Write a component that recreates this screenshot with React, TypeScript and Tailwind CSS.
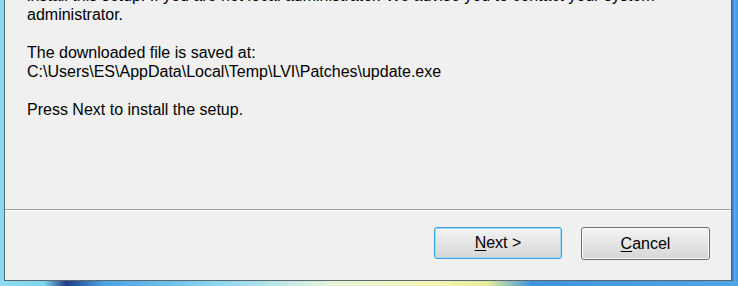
/**
 * Installer wizard page — "update downloaded" step, Windows 7 Aero frame.
 */

const FONT = { fontFamily: '"Liberation Sans", Arial, sans-serif' }

function WizardButton({
  accel,
  rest,
  focused,
}: {
  accel: string
  rest: string
  focused?: boolean
}) {
  return (
    <button
      className={
        focused
          ? "h-[32px] w-[128px] rounded-[3px] border border-[#3c9fdb] bg-gradient-to-b from-[#f4f4f4] to-[#d6d6d6] text-[16px] text-black shadow-[inset_0_0_0_1px_#a6daf5]"
          : "h-[33px] w-[129px] rounded-[3px] border border-[#707070] bg-gradient-to-b from-[#f4f4f4] to-[#d6d6d6] text-[16px] text-black shadow-[inset_0_0_0_1px_#fbfbfb]"
      }
      style={FONT}
    >
      <span className="underline underline-offset-2">{accel}</span>
      {rest}
    </button>
  )
}

export default function App() {
  return (
    <div className="flex h-[286px] w-[738px] flex-col overflow-hidden bg-[linear-gradient(90deg,#8fdcef_0%,#7fd2ec_6%,#1d3c86_9%,#4aa2e2_14%,#8fd8f0_30%,#e9f4dc_45%,#f3f5b0_60%,#e8ec9a_66%,#3f95dc_72%,#4fa5e6_100%)]">
      {/* side frames + window body */}
      <div className="flex min-h-0 flex-1">
        <div className="w-[4px] shrink-0 bg-[#8ed8ec]" />

        <div className="flex min-w-0 flex-1 flex-col border-b border-l border-r border-[#5b6770] bg-[#f0f0f0]">
          {/* Message — first line scrolled mostly out of view, as in the dialog */}
          <div className="h-[209px] shrink-0 overflow-hidden pl-[22px]">
            <div
              className="mt-[-14px] text-[16px] leading-[19px] text-black"
              style={FONT}
            >
              <p className="whitespace-nowrap">
                install this setup. If you are not local administrator. We advise you to contact your system
              </p>
              <p>administrator.</p>
              <p className="mt-[19px]">The downloaded file is saved at:</p>
              <p>C:\Users\ES\AppData\Local\Temp\LVI\Patches\update.exe</p>
              <p className="mt-[19px]">Press Next to install the setup.</p>
            </div>
          </div>

          {/* Separator */}
          <div className="h-[2px] shrink-0 border-t border-[#a0a0a0] bg-white" />

          {/* Buttons */}
          <div className="flex flex-1 items-start justify-end gap-[19px] pr-[21px] pt-[16px]">
            <WizardButton accel="N" rest="ext >" focused />
            <WizardButton accel="C" rest="ancel" />
          </div>
        </div>

        <div className="w-[6px] shrink-0 bg-[linear-gradient(90deg,#2d6fb8,#58aee8_40%,#3e93da)]" />
      </div>

      {/* bottom frame */}
      <div className="h-[5px] shrink-0" />
    </div>
  )
}
